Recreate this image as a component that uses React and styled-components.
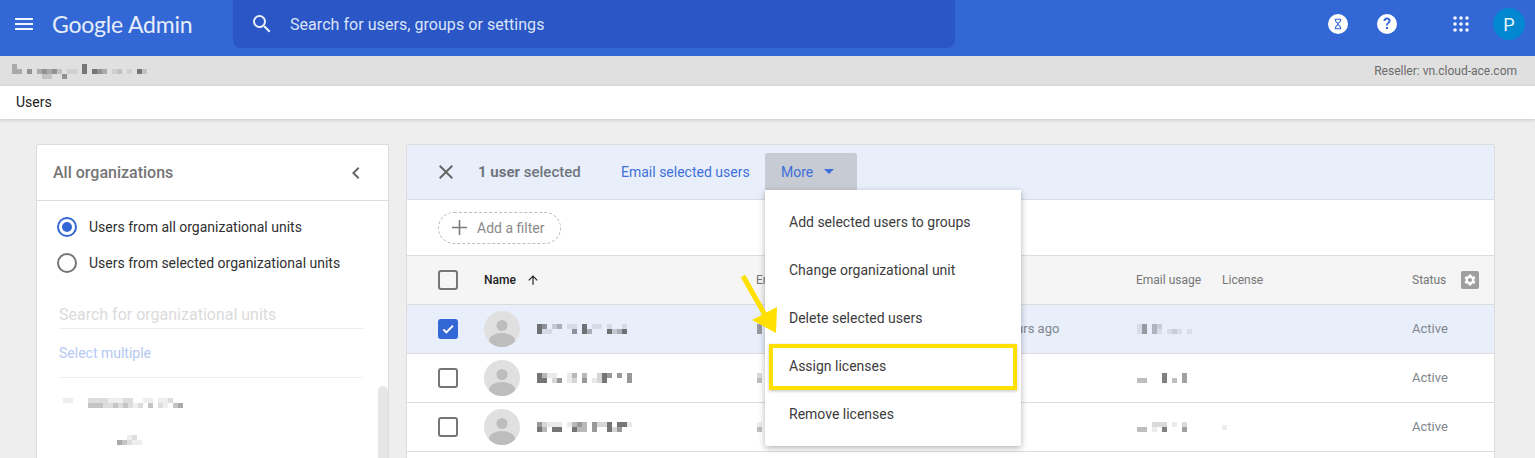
import React from 'react';
import styled, { createGlobalStyle } from 'styled-components';

const Global = createGlobalStyle`
  html, body { margin: 0; padding: 0; background: #eeeeee; }
  body { font-family: Roboto, "Liberation Sans", sans-serif; overflow: hidden; }
  * { box-sizing: border-box; }
`;

const Page = styled.div`
  position: relative;
  width: 1535px;
  height: 458px;
  overflow: hidden;
  background: #eeeeee;
`;

const TopBar = styled.header`
  height: 56px;
  background: #3367d6;
  display: flex;
  align-items: flex-start;
  padding-left: 12px;
`;
const IconSlot = styled.span`
  display: flex;
  align-items: center;
  justify-content: center;
  height: 48px;
  width: ${p => p.$w || 24}px;
  flex: none;
`;
const Logo = styled.div`
  font-family: Lato, sans-serif;
  font-size: 23px;
  letter-spacing: -0.2px;
  line-height: 48px;
  color: #e6edfa;
  margin-left: 16px;
  width: 181px;
  white-space: nowrap;
  flex: none;
`;
const SearchBox = styled.div`
  width: 722px;
  height: 48px;
  background: #2a56c6;
  border-radius: 0 0 8px 8px;
  display: flex;
  align-items: center;
  padding-left: 17px;
  gap: 16px;
  color: #dbe4f7;
  font-size: 16px;
  letter-spacing: 0.05px;
  flex: none;
`;
const TopActions = styled.div`
  margin-left: auto;
  display: flex;
  align-items: center;
  height: 48px;
  padding-right: 10px;
`;
const RoundIcon = styled.span`
  display: flex;
  margin-right: ${p => p.$mr}px;
`;
const Account = styled.div`
  width: 32px;
  height: 32px;
  border-radius: 50%;
  background: #0288d1;
  color: #e6f3fb;
  font-size: 18px;
  display: flex;
  align-items: center;
  justify-content: center;
`;

const OrgBar = styled.div`
  height: 30px;
  background: #e0e0e0;
  display: flex;
  align-items: center;
  justify-content: space-between;
  padding: 0 18px 0 12px;
`;
const Reseller = styled.div`
  font-size: 12px;
  color: #6b6b6b;
`;
const Crumb = styled.div`
  height: 33px;
  background: #fff;
  box-shadow: 0 1px 4px rgba(0,0,0,.16);
  padding-left: 16px;
  font-size: 14px;
  line-height: 33px;
  color: #212121;
  position: relative;
`;

const Content = styled.main`
  display: flex;
  gap: 17px;
  padding: 25px 0 0 36px;
  align-items: flex-start;
`;
const Card = styled.section`
  background: #fff;
  border: 1px solid #dcdcdc;
  border-radius: 2px 2px 0 0;
  width: ${p => p.$w}px;
  height: 400px;
  flex: none;
`;
const SideHead = styled.div`
  height: 56px;
  border-bottom: 1px solid #dcdcdc;
  padding: 0 20px 0 16px;
  display: flex;
  align-items: center;
  justify-content: space-between;
  font-size: 16px;
  font-weight: 500;
  color: #757575;
`;
const SideBody = styled.div`
  position: relative;
  padding: 8px 24px 0 20px;
`;
const RadioRow = styled.div`
  display: flex;
  align-items: center;
  gap: 12px;
  height: 36px;
  font-size: 14px;
  color: #303030;
`;
const Radio = styled.span`
  width: 20px;
  height: 20px;
  border-radius: 50%;
  border: 2px solid ${p => (p.$on ? '#3367d6' : '#757575')};
  display: flex;
  align-items: center;
  justify-content: center;
  flex: none;
  &::after {
    content: '';
    width: 10px;
    height: 10px;
    border-radius: 50%;
    background: ${p => (p.$on ? '#3367d6' : 'transparent')};
  }
`;
const OrgSearch = styled.div`
  margin: 20px 0 0 2px;
  height: 28px;
  border-bottom: 1px solid #eeeeee;
  font-size: 16px;
  line-height: 28px;
  color: #dbdbdb;
`;
const SelectMultiple = styled.div`
  margin: 0 2px 0 2px;
  height: 49px;
  border-bottom: 1px solid #eeeeee;
  padding-top: 16px;
  font-size: 14px;
  line-height: 17px;
  color: #b4c8f3;
`;
const MosaicWrap = styled.div`
  display: flex;
  padding: ${p => p.$pad};
`;
const Scroll = styled.div`
  position: absolute;
  right: 0;
  top: 185px;
  width: 10px;
  height: 200px;
  background: #e6e6e6;
  border-radius: 5px 5px 0 0;
`;

const SelBar = styled.div`
  height: 55px;
  background: #e8effb;
  border-bottom: 1px solid #d9dde3;
  display: flex;
  align-items: center;
  padding-left: 32px;
`;
const SelCount = styled.div`
  margin-left: 25px;
  width: 143px;
  font-size: 15px;
  font-weight: 500;
  color: #70757c;
  b { font-weight: 700; }
`;
const EmailLink = styled.div`
  width: 144px;
  font-size: 14px;
  color: #3f6fd9;
  white-space: nowrap;
`;
const MoreBtn = styled.div`
  align-self: flex-end;
  width: 92px;
  height: 37px;
  background: #c6cbd4;
  border-radius: 2px 2px 0 0;
  display: flex;
  align-items: center;
  padding-left: 16px;
  gap: 11px;
  font-size: 14px;
  color: #3f6fd9;
  margin-bottom: 9px;
`;
const Caret = styled.span`
  width: 0;
  height: 0;
  border-left: 5px solid transparent;
  border-right: 5px solid transparent;
  border-top: 5px solid #3f6fd9;
`;
const FilterRow = styled.div`
  height: 56px;
  border-bottom: 1px solid #dcdcdc;
  display: flex;
  align-items: center;
  padding-left: 31px;
`;
const FilterPill = styled.div`
  width: 123px;
  height: 32px;
  border: 1px dashed #bdbdbd;
  border-radius: 16px;
  display: flex;
  align-items: center;
  padding-left: 13px;
  gap: 10px;
  font-size: 14px;
  color: #8a8a8a;
`;
const gridCols = '46px 272px 235px 145px 86px 190px 1fr';
const HeadRow = styled.div`
  height: 49px;
  background: #f5f5f5;
  border-bottom: 1px solid #dcdcdc;
  display: grid;
  grid-template-columns: ${gridCols};
  align-items: center;
  padding-left: 31px;
  font-size: 12px;
  color: #757575;
`;
const NameHead = styled.div`
  display: flex;
  align-items: center;
  gap: 10px;
  font-weight: 500;
  color: #212121;
`;
const StatusHead = styled.div`
  display: flex;
  align-items: center;
  gap: 15px;
`;
const Row = styled.div`
  height: 49px;
  background: ${p => (p.$sel ? '#e8effb' : '#fff')};
  border-bottom: 1px solid #dcdcdc;
  display: grid;
  grid-template-columns: ${gridCols};
  align-items: center;
  padding-left: 31px;
  font-size: 13px;
  color: #80868b;
`;
const RowText = styled.div`
  padding-bottom: 2px;
`;
const Check = styled.span`
  width: 20px;
  height: 20px;
  border-radius: 3px;
  border: 2px solid #757575;
  display: flex;
  &[data-on='true'] {
    background: #3367d6;
    border-color: #3367d6;
  }
`;
const NameCell = styled.div`
  display: flex;
  align-items: center;
  gap: 17px;
`;
const Avatar = styled.svg`
  width: 36px;
  height: 36px;
  border-radius: 50%;
  flex: none;
`;

const Menu = styled.div`
  position: absolute;
  left: 765px;
  top: 190px;
  width: 256px;
  height: 256px;
  background: #fff;
  padding: 8px 0;
  border-radius: 0 0 2px 2px;
  box-shadow: 0 2px 6px rgba(0,0,0,.3);
`;
const MenuItem = styled.div`
  height: 48px;
  line-height: 48px;
  padding-left: 24px;
  font-size: 14px;
  color: #3c3c3c;
`;
const Highlight = styled.div`
  position: absolute;
  left: 769px;
  top: 344px;
  width: 248px;
  height: 46px;
  border: 4px solid #ffe000;
  box-shadow: 0 1px 3px rgba(0,0,0,.25);
`;
const Arrow = styled.svg`
  position: absolute;
  left: 735px;
  top: 270px;
`;

const shades = { a: .1, b: .2, c: .35, d: .5, e: .68, f: .8 };
function Mosaic({ rows, cell = 5, color = '#333' }) {
  const w = Math.max(...rows.map(r => r.length)) * cell;
  const h = rows.length * cell;
  return (
    <svg width={w} height={h} shapeRendering="crispEdges" style={{ flex: 'none', display: 'block' }}>
      {rows.flatMap((r, y) =>
        r.split('').map((c, x) =>
          shades[c] ? <rect key={x + '-' + y} x={x * cell} y={y * cell} width={cell} height={cell} fill={color} opacity={shades[c]} /> : null
        )
      )}
    </svg>
  );
}

const AvatarIcon = () => (
  <Avatar viewBox="0 0 36 36">
    <rect width="36" height="36" fill="#e0e0e0" />
    <circle cx="18" cy="14.5" r="5.5" fill="#bdbdbd" />
    <ellipse cx="18" cy="30" rx="13" ry="8" fill="#bdbdbd" />
  </Avatar>
);

const people = [
  { sel: true, name: ['ed.bc.aa.e.aa.a..a.', 'eaa....d.ec...ebce.'], mail: ['d', 'd'], usage: ['ad.cb......', 'ad.ca.aba.a'], time: '3 hours ago' },
  { name: ['ecaa..ac.c..bed.d.d', 'ee.bd.ab.d.abe....d'], mail: ['b', 'c'], usage: ['.....e...d', 'cc...e.c.d'] },
  { name: ['dbaaa.acdc.dbbe.eea', 'ec.ee..ecc.d..ebd..'], mail: ['a', 'c'], usage: ['...bbb.a.b', 'cc.a.e...d'], lic: true },
];

export default function App() {
  return (
    <Page>
      <Global />
      <TopBar>
        <IconSlot>
          <svg width="24" height="24" viewBox="0 0 24 24" fill="#f1f5fc"><path d="M3 18h18v-2H3zm0-5h18v-2H3zm0-7v2h18V6z" /></svg>
        </IconSlot>
        <Logo>Google Admin</Logo>
        <SearchBox>
          <svg width="24" height="24" viewBox="0 0 24 24" fill="#eaf0fb"><path d="M15.5 14h-.79l-.28-.27A6.47 6.47 0 0 0 16 9.5 6.5 6.5 0 1 0 9.5 16c1.61 0 3.09-.59 4.23-1.57l.27.28v.79l5 4.99L20.49 19zm-6 0C7.01 14 5 11.99 5 9.5S7.01 5 9.5 5 14 7.01 14 9.5 11.99 14 9.5 14z" /></svg>
          <span>Search for users, groups or settings</span>
        </SearchBox>
        <TopActions>
          <RoundIcon $mr={29}>
            <svg width="20" height="20" viewBox="0 0 20 20">
              <circle cx="10" cy="10" r="10" fill="#fff" />
              <path d="M6.8 5.200h6.400M6.800 14.800h6.400M7.600 5.200v1.500c0 1.500 2.400 2.300 2.400 3.300s-2.400 1.800-2.400 3.300v1.500M12.400 5.200v1.500c0 1.500-2.400 2.300-2.400 3.300s2.400 1.800 2.400 3.300v1.500" fill="none" stroke="#3367d6" strokeWidth="1.100" />
            </svg>
          </RoundIcon>
          <RoundIcon $mr={56}>
            <svg width="20" height="20" viewBox="0 0 20 20">
              <circle cx="10" cy="10" r="10" fill="#fff" />
              <path d="M10 3.600c-2 0-3.500 1.400-3.600 3.300h2c.1-.9.7-1.500 1.600-1.500s1.600.6 1.600 1.400c0 .7-.4 1.100-1 1.600-.9.7-1.600 1.400-1.600 3h1.900c0-1 .4-1.400 1.100-2 .8-.7 1.600-1.400 1.600-2.700C13.600 4.900 12 3.600 10 3.600zM9 13v2h2v-2z" fill="#3367d6" />
            </svg>
          </RoundIcon>
          <RoundIcon $mr={24}>
            <svg width="16" height="16" viewBox="0 0 16 16" fill="#f1f5fc">
              {[2, 8, 14].flatMap(y => [2, 8, 14].map(x => <circle key={x + '' + y} cx={x} cy={y} r="1.800" />))}
            </svg>
          </RoundIcon>
          <Account>P</Account>
        </TopActions>
      </TopBar>

      <OrgBar>
        <Mosaic color="#444" rows={[
          'c.............e............',
          'cc.d.cdcdb.aa.e.edc.ab.a.eb',
          '......bb..d................',
        ]} />
        <Reseller>Reseller: vn.cloud-ace.com</Reseller>
      </OrgBar>
      <Crumb>Users</Crumb>

      <Content>
        <Card $w={353}>
          <SideHead>
            All organizations
            <svg width="24" height="24" viewBox="0 0 24 24" fill="#666"><path d="M15.410 7.410 14 6l-6 6 6 6 1.410-1.410L10.830 12z" /></svg>
          </SideHead>
          <SideBody>
            <RadioRow><Radio $on />Users from all organizational units</RadioRow>
            <RadioRow><Radio />Users from selected organizational units</RadioRow>
            <OrgSearch>Search for organizational units</OrgSearch>
            <SelectMultiple>Select multiple</SelectMultiple>
            <MosaicWrap $pad="20px 0 0 6px">
              <Mosaic color="#555" rows={['aa...bbbbaaabb..aa.aab.', '.....cccbbcbcbab.c.ba.cd']} />
            </MosaicWrap>
            <MosaicWrap $pad="27px 0 0 60px">
              <Mosaic color="#555" rows={['..ab..', 'dcbaa.']} />
            </MosaicWrap>
            <Scroll />
          </SideBody>
        </Card>

        <Card $w={1089}>
          <SelBar>
            <svg width="14" height="14" viewBox="5 5 14 14" fill="#666"><path d="M19 6.410 17.590 5 12 10.590 6.410 5 5 6.410 10.590 12 5 17.590 6.410 19 12 13.410 17.590 19 19 17.590 13.410 12z" /></svg>
            <SelCount><b>1 user</b> selected</SelCount>
            <EmailLink>Email selected users</EmailLink>
            <MoreBtn>More<Caret /></MoreBtn>
          </SelBar>
          <FilterRow>
            <FilterPill>
              <svg width="15" height="15" viewBox="0 0 15 15" fill="#7a7a7a"><path d="M6.700 0h1.600v6.700H15v1.600H8.300V15H6.700V8.300H0V6.700h6.700z" /></svg>
              Add a filter
            </FilterPill>
          </FilterRow>
          <HeadRow>
            <Check />
            <NameHead>
              Name
              <svg width="14" height="14" viewBox="0 0 24 24" fill="#212121"><path d="m4 12 1.410 1.410L11 7.830V20h2V7.830l5.580 5.590L20 12l-8-8z" /></svg>
            </NameHead>
            <div>Email</div>
            <div />
            <div>Email usage</div>
            <div>License</div>
            <StatusHead>
              Status
              <svg width="18" height="18" viewBox="0 0 18 18">
                <rect width="18" height="18" rx="2" fill="#9e9e9e" />
                <g transform="translate(2 2) scale(.5833)">
                  <path fill="#fff" d="M19.140 12.940c.04-.3.06-.61.06-.94 0-.32-.02-.64-.07-.94l2.030-1.580a.49.49 0 0 0 .12-.61l-1.920-3.320a.49.49 0 0 0-.59-.22l-2.390.96c-.5-.38-1.030-.7-1.620-.94l-.36-2.540a.48.48 0 0 0-.48-.41h-3.840a.48.48 0 0 0-.47.41l-.36 2.540c-.59.24-1.130.57-1.620.94l-2.390-.96a.48.48 0 0 0-.59.22L2.740 8.870a.48.48 0 0 0 .12.61l2.030 1.580c-.05.3-.09.63-.09.94s.02.64.07.94l-2.030 1.580a.49.49 0 0 0-.12.61l1.920 3.320c.12.22.37.29.59.22l2.390-.96c.5.38 1.030.7 1.620.94l.36 2.540c.05.24.24.41.48.41h3.840c.24 0 .44-.17.47-.41l.36-2.540c.59-.24 1.130-.56 1.620-.94l2.390.96c.22.08.47 0 .59-.22l1.920-3.320a.48.48 0 0 0-.12-.61zM12 15.600a3.600 3.600 0 1 1 0-7.200 3.600 3.600 0 0 1 0 7.200z" />
                </g>
              </svg>
            </StatusHead>
          </HeadRow>
          {people.map((p, i) => (
            <Row key={i} $sel={p.sel}>
              <Check data-on={!!p.sel}>
                {p.sel && <svg width="16" height="16" viewBox="0 0 24 24" fill="none" stroke="#fff" strokeWidth="3"><path d="M5 12.500l4.500 4.500L19.500 7" /></svg>}
              </Check>
              <NameCell>
                <AvatarIcon />
                <Mosaic color="#333" rows={p.name} />
              </NameCell>
              <MosaicWrap $pad="0 0 0 1px">
                <Mosaic color="#444" rows={p.mail} />
              </MosaicWrap>
              <RowText>{p.time}</RowText>
              <MosaicWrap $pad="0 0 0 1px">
                <Mosaic color="#444" rows={p.usage} />
              </MosaicWrap>
              <div>{p.lic && <Mosaic color="#444" rows={['a']} />}</div>
              <RowText>Active</RowText>
            </Row>
          ))}
        </Card>
      </Content>

      <Menu>
        <MenuItem>Add selected users to groups</MenuItem>
        <MenuItem>Change organizational unit</MenuItem>
        <MenuItem>Delete selected users</MenuItem>
        <MenuItem>Assign licenses</MenuItem>
        <MenuItem>Remove licenses</MenuItem>
      </Menu>
      <Highlight />
      <Arrow width="50" height="70" viewBox="0 0 50 70">
        <line x1="8" y1="6" x2="30" y2="45" stroke="#ffe000" strokeWidth="5" />
        <polygon points="17,50 42,37 41,63" fill="#ffe000" />
      </Arrow>
    </Page>
  );
}
